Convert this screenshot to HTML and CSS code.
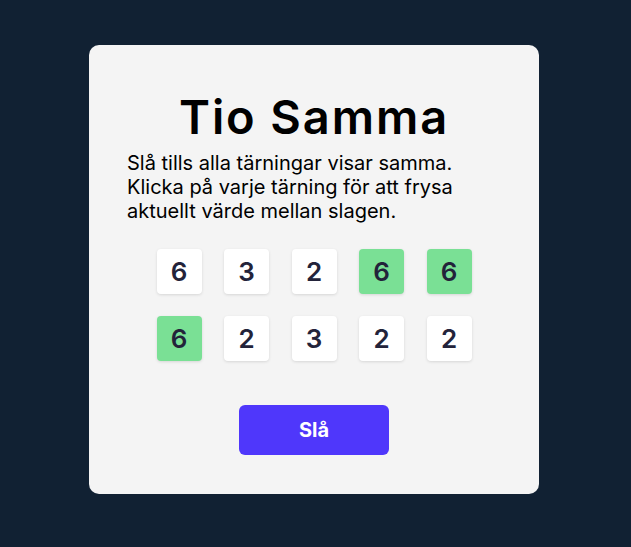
FILE: index.html
```html
<!DOCTYPE html>
<html lang="sv">
<head>
<meta charset="utf-8">
<title>Tio Samma</title>
<link rel="stylesheet" href="styles.css">
</head>
<body>
<main class="card">
  <h1 class="title">Tio Samma</h1>
  <p class="intro">Slå tills alla tärningar visar samma. Klicka på varje tärning för att frysa aktuellt värde mellan slagen.</p>
  <div class="dice">
    <button class="die">6</button>
    <button class="die">3</button>
    <button class="die">2</button>
    <button class="die held">6</button>
    <button class="die held">6</button>
    <button class="die held">6</button>
    <button class="die">2</button>
    <button class="die">3</button>
    <button class="die">2</button>
    <button class="die">2</button>
  </div>
  <button class="roll">Slå</button>
</main>
</body>
</html>
```
FILE: styles.css
```css
html, body {
  margin: 0;
  padding: 0;
}
body {
  background: #112133;
  min-height: 547px;
  display: flex;
  justify-content: center;
  align-items: flex-start;
  font-family: Inter, "Noto Sans", sans-serif;
}
.card {
  box-sizing: border-box;
  width: 450px;
  height: 449px;
  margin: 45px 0 0 -3px;
  background: #f4f4f4;
  border-radius: 10px;
  padding: 44px 38px 0;
  display: flex;
  flex-direction: column;
  align-items: center;
}
.title {
  margin: 0;
  font-size: 47px;
  font-weight: 600;
  letter-spacing: 1.9px;
  line-height: 56px;
  color: #000;
}
.intro {
  align-self: stretch;
  margin: 6px 0 0;
  font-size: 20px;
  line-height: 24px;
  color: #000;
}
.dice {
  display: grid;
  grid-template-columns: repeat(5, 45px);
  column-gap: 22.5px;
  row-gap: 22px;
  margin-top: 26px;
}
.die {
  width: 45px;
  height: 45px;
  border: none;
  border-radius: 4px;
  background: #fff;
  box-shadow: 0 1px 3px rgba(0, 0, 0, 0.12);
  font-family: Inter, "Noto Sans", sans-serif;
  font-size: 26px;
  font-weight: 600;
  color: #23233a;
  padding: 0;
  display: flex;
  align-items: center;
  justify-content: center;
}
.die.held {
  background: #7ae095;
}
.roll {
  margin-top: 44px;
  width: 150px;
  height: 50px;
  border: none;
  border-radius: 6px;
  background: #4f37fb;
  color: #fff;
  font-family: Inter, "Noto Sans", sans-serif;
  font-size: 20px;
  font-weight: 700;
}
```
